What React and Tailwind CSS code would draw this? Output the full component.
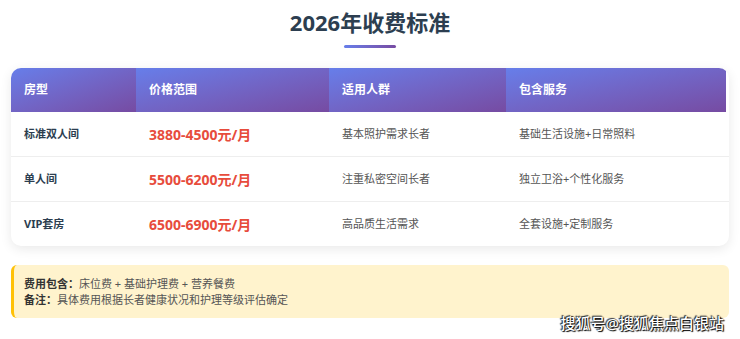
const rows = [
  { type: "标准双人间", price: "3880-4500元/月", who: "基本照护需求长者", svc: "基础生活设施+日常照料" },
  { type: "单人间", price: "5500-6200元/月", who: "注重私密空间长者", svc: "独立卫浴+个性化服务" },
  { type: "VIP套房", price: "6500-6900元/月", who: "高品质生活需求", svc: "全套设施+定制服务" },
];

const heads = ["房型", "价格范围", "适用人群", "包含服务"];

export default function App() {
  return (
    <main className="relative w-[740px] h-[339px] bg-white overflow-hidden font-['Noto_Sans','Noto_Sans_CJK_SC',sans-serif]">
      {/* title */}
      <div className="flex flex-col items-center pt-[7px]">
        <h1 className="text-[22px] leading-[30px] font-bold text-[#2c3e50]">2026年收费标准</h1>
        <div className="mt-[8px] w-[52px] h-[3px] rounded-full bg-gradient-to-r from-[#667eea] to-[#764ba2]" />
      </div>

      {/* table */}
      <div className="mx-[11px] mt-[20px] rounded-[10px] overflow-hidden bg-white shadow-[0_3px_12px_rgba(0,0,0,0.09)]">
        <div className="grid grid-cols-[125px_193px_177px_220px] h-[44px]">
          {heads.map((h) => (
            <div
              key={h}
              className="flex items-center pl-[13px] text-[12px] font-bold text-white bg-gradient-to-br from-[#667eea] to-[#764ba2]"
            >
              {h}
            </div>
          ))}
        </div>
        {rows.map((r, i) => (
          <div
            key={r.type}
            className={`grid grid-cols-[125px_193px_177px_220px] items-center ${
              i < rows.length - 1 ? "h-[45px] border-b border-[#eeeeee]" : "h-[44px]"
            }`}
          >
            <div className="pl-[13px] text-[11px] font-bold text-[#2c3e50]">{r.type}</div>
            <div className="pl-[13px] text-[14px] font-bold text-[#e74c3c]">{r.price}</div>
            <div className="pl-[13px] text-[11px] text-[#555]">{r.who}</div>
            <div className="pl-[13px] text-[11px] text-[#555]">{r.svc}</div>
          </div>
        ))}
      </div>

      {/* note */}
      <div className="mx-[11px] mt-[19px] h-[53px] rounded-[6px] bg-[#fff3cd] border-l-[3px] border-[#ffc107] pl-[10px] flex flex-col justify-center text-[11px] leading-[16px] text-[#555]">
        <p>
          <span className="font-bold text-[#333]">费用包含：</span>床位费 + 基础护理费 + 营养餐费
        </p>
        <p>
          <span className="font-bold text-[#333]">备注：</span>具体费用根据长者健康状况和护理等级评估确定
        </p>
      </div>

      {/* watermark */}
      <div className="absolute right-[16px] bottom-[6px] text-[15px] leading-[20px] font-medium text-white [text-shadow:0_0_1px_#000,1px_1px_1px_#000,-1px_-1px_1px_#333]">
        搜狐号@搜狐焦点白银站
      </div>
    </main>
  );
}
